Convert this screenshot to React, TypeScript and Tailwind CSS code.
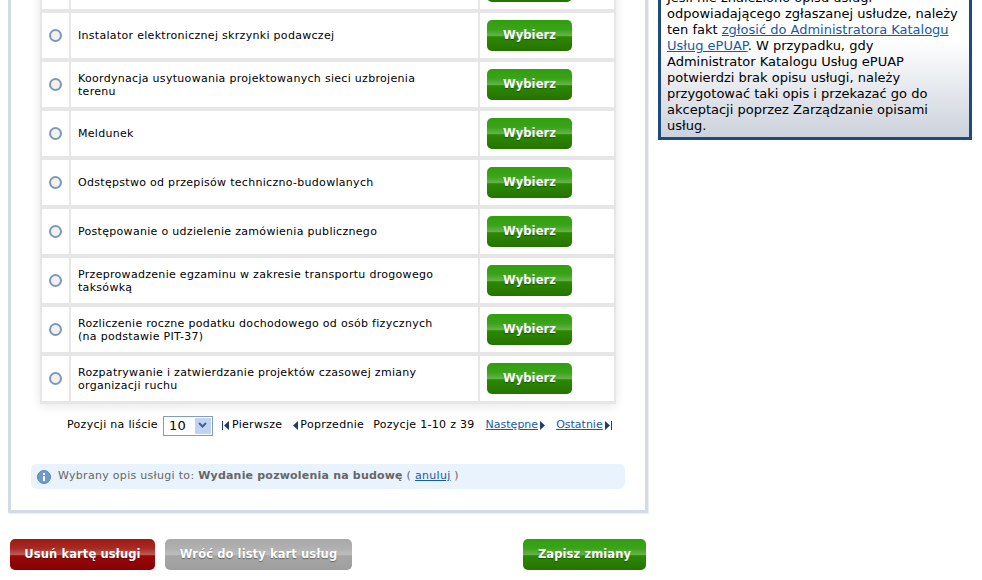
import React from 'react';

const services = [
  '',
  'Instalator elektronicznej skrzynki podawczej',
  'Koordynacja usytuowania projektowanych sieci uzbrojenia terenu',
  'Meldunek',
  'Odstępstwo od przepisów techniczno-budowlanych',
  'Postępowanie o udzielenie zamówienia publicznego',
  'Przeprowadzenie egzaminu w zakresie transportu drogowego taksówką',
  'Rozliczenie roczne podatku dochodowego od osób fizycznych (na podstawie PIT-37)',
  'Rozpatrywanie i zatwierdzanie projektów czasowej zmiany organizacji ruchu',
];

const green = 'bg-[linear-gradient(#2f9f0c_0%,#3ba31a_30%,#64b248_50%,#2b8a02_54%,#267200_100%)]';

function Button({ label, className }: { label: string; className: string }) {
  return (
    <button className={`h-[31px] rounded-[5px] text-white font-bold text-[11.5px] tracking-[0.1px] [text-shadow:0_1px_1px_rgba(0,0,0,0.4)] ${className}`}>
      {label}
    </button>
  );
}

function Row({ label }: { label: string }) {
  return (
    <div className="flex h-[45px] gap-[2px] bg-[#e6e6e6]">
      <div className="flex w-[27px] items-center justify-center bg-white">
        <span className="h-[13px] w-[13px] rounded-full border-2 border-[#7f98b5] bg-[#f1f1f1]" />
      </div>
      <div className="flex w-[407px] items-center bg-white px-[7px] text-[11px] leading-[13px] tracking-[0.3px] text-black">
        <span className="w-[365px]">{label}</span>
      </div>
      <div className="flex flex-1 items-center bg-white pl-[7px]">
        <Button label="Wybierz" className={`w-[85px] ${green}`} />
      </div>
    </div>
  );
}

function Pager() {
  return (
    <div className="mt-[9px] ml-[56px] flex h-[25px] items-center text-[11px] tracking-[0.3px] text-black">
      <span>Pozycji na liście</span>
      <div className="ml-[5px] flex h-[20px] w-[50px] items-center justify-between border border-[#7f9db9] bg-white pr-[1px] pl-[5px] text-[13px]">
        10
        <span className="flex h-[16px] w-[16px] items-center justify-center bg-[#c1d2f7]">
          <svg width="9" height="7" viewBox="0 0 9 7"><path d="M1 1l3.5 3.5L8 1" fill="none" stroke="#4d6185" strokeWidth="2" /></svg>
        </span>
      </div>
      <span className="ml-[9px] flex items-center gap-[1px]">
        <svg width="9" height="9" viewBox="0 0 9 9"><path d="M0 0h1v9H0zM7 0v9L2 4.500z" fill="#1f3d66" /></svg>
        Pierwsze
      </span>
      <span className="ml-[10px] flex items-center gap-[1px]">
        <svg width="7" height="9" viewBox="0 0 7 9"><path d="M6 0v9L1 4.500z" fill="#1f3d66" /></svg>
        Poprzednie
      </span>
      <span className="ml-[9px]">Pozycje 1-10 z 39</span>
      <span className="ml-[11px] flex items-center gap-[2px]">
        <a className="tracking-normal text-[#1a5aa0] underline">Następne</a>
        <svg width="6" height="9" viewBox="0 0 6 9"><path d="M0 0v9l5-4.500z" fill="#1f3d66" /></svg>
      </span>
      <span className="ml-[10px] flex items-center gap-[2px]">
        <a className="tracking-normal text-[#1a5aa0] underline">Ostatnie</a>
        <svg width="8" height="9" viewBox="0 0 8 9"><path d="M0 0v9l5-4.500zM6 0h1v9H6z" fill="#1f3d66" /></svg>
      </span>
    </div>
  );
}

function InfoIcon() {
  return (
    <svg width="14" height="14" viewBox="0 0 14 14">
      <circle cx="7" cy="7" r="6.500" fill="#6c9bd0" stroke="#5a83b5" />
      <rect x="6" y="6" width="2" height="5" fill="#fff" />
      <rect x="6" y="3" width="2" height="2" fill="#fff" />
    </svg>
  );
}

export default function App() {
  return (
    <div className="h-[580px] w-[982px] overflow-hidden bg-white font-['DejaVu_Sans','Liberation_Sans',sans-serif]">
      <div className="mt-[-60px] flex items-start pl-[8px]">
        <div className="w-[640px]">
          <div className="box-content h-[549px] w-[634px] border-[3px] border-t-0 border-[#d3dbe6] pt-[21px] shadow-[1px_1px_0_#eee]">
            <div className="ml-[29px] w-[576px] bg-[#e6e6e6] px-[2px] pb-[3px] shadow-[0_2px_10px_rgba(0,0,0,0.1)]">
              <div className="mt-[3px] flex flex-col gap-[4px]">
                {services.map((s, i) => <Row key={i} label={s} />)}
              </div>
            </div>
            <Pager />
            <div className="mt-[26px] ml-[20px] flex h-[25px] w-[594px] items-center rounded-[6px] bg-[#e8f3fd] pl-[6px] text-[11px] tracking-[0.3px] text-[#666]">
              <InfoIcon />
              <span className="ml-[7px]">Wybrany opis usługi to: <b className="tracking-[0.2px]">Wydanie pozwolenia na budowę</b> ( <a className="text-[#1a5aa0] underline">anuluj</a> )</span>
            </div>
          </div>
          <div className="mt-[26px] flex items-center pl-[2px]">
            <Button label="Usuń kartę usługi" className="w-[145px] bg-[linear-gradient(#9e1a12_0%,#a82a24_30%,#bc5a55_50%,#9a0a08_54%,#860005_100%)]" />
            <Button label="Wróć do listy kart usług" className="ml-[10px] w-[187px] bg-[linear-gradient(#a8a8a8_0%,#b0b0b0_30%,#bdbdbd_50%,#a6a6a6_54%,#9e9e9e_100%)]" />
            <Button label="Zapisz zmiany" className={`ml-[171px] w-[123px] ${green}`} />
          </div>
        </div>
        <div className="ml-[10px] flex h-[200px] w-[314px] flex-col justify-end border-[3px] border-[#1f4a80] bg-[linear-gradient(#fff_50%,#ccd2dc_100%)] px-[6px] pb-[3px] text-[13px] leading-[16px] text-black">
          <p>
            Jeśli nie znaleziono opisu usługi odpowiadającego zgłaszanej usłudze, należy ten fakt <a className="text-[#1a5aa0] underline">zgłosić do Administratora Katalogu Usług ePUAP</a>. W przypadku, gdy Administrator Katalogu Usług ePUAP potwierdzi brak opisu usługi, należy przygotować taki opis i przekazać go do akceptacji poprzez Zarządzanie opisami usług.
          </p>
        </div>
      </div>
    </div>
  );
}
